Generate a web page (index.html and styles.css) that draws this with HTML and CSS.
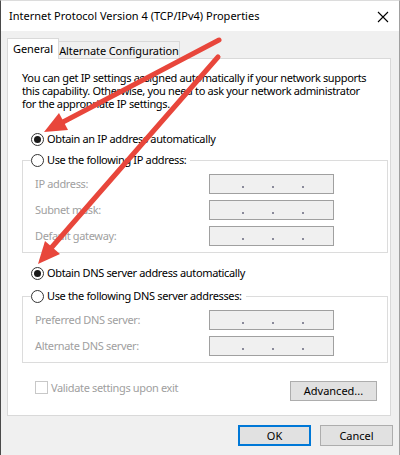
FILE: index.html
```html
<!DOCTYPE html>
<html>
<head>
<meta charset="utf-8">
<link rel="stylesheet" href="styles.css">
</head>
<body>
<div class="window">
  <div class="titlebar">
    <span class="title">Internet Protocol Version 4 (TCP/IPv4) Properties</span>
    <svg class="close" width="12" height="12" viewBox="0 0 12 12"><path d="M1 1 L11 11 M11 1 L1 11" stroke="#000" stroke-width="1.1" fill="none"/></svg>
  </div>
  <div class="tabs">
    <div class="tab active">General</div>
    <div class="tab">Alternate Configuration</div>
  </div>
  <div class="panel">
    <p class="intro">You can get IP settings assigned automatically if your network supports<br>this capability. Otherwise, you need to ask your network administrator<br>for the appropriate IP settings.</p>
    <div class="radio-row first"><span class="radio checked"></span><span>Obtain an IP address automatically</span></div>
    <div class="group g1">
      <div class="group-head"><span class="radio"></span><span>Use the following IP address:</span></div>
      <div class="rows">
        <div class="row"><span class="lbl">IP address:</span><span class="ip"><i></i><i></i><i></i></span></div>
        <div class="row"><span class="lbl">Subnet mask:</span><span class="ip"><i></i><i></i><i></i></span></div>
        <div class="row"><span class="lbl">Default gateway:</span><span class="ip"><i></i><i></i><i></i></span></div>
      </div>
    </div>
    <div class="radio-row dns"><span class="radio checked"></span><span>Obtain DNS server address automatically</span></div>
    <div class="group g2">
      <div class="group-head"><span class="radio"></span><span>Use the following DNS server addresses:</span></div>
      <div class="rows">
        <div class="row"><span class="lbl">Preferred DNS server:</span><span class="ip"><i></i><i></i><i></i></span></div>
        <div class="row"><span class="lbl">Alternate DNS server:</span><span class="ip"><i></i><i></i><i></i></span></div>
      </div>
    </div>
    <div class="bottom-row">
      <div class="check"><span class="box"></span><span>Validate settings upon exit</span></div>
      <div class="btn adv">Advanced...</div>
    </div>
  </div>
  <div class="footer">
    <div class="btn ok">OK</div>
    <div class="btn">Cancel</div>
  </div>
  <svg class="arrows" width="400" height="455" viewBox="0 0 400 455">
    <g stroke="#e8463b" stroke-width="5" stroke-linecap="round" fill="none">
      <line x1="219" y1="40" x2="63" y2="122"/>
      <line x1="218" y1="57" x2="52" y2="247"/>
    </g>
    <g fill="#e8463b">
      <polygon points="44,132 68,130 59,113"/>
      <polygon points="38,264 60,254 45,241"/>
    </g>
  </svg>
</div>
</body>
</html>
```

FILE: styles.css
```css
html, body {
  margin: 0;
  padding: 0;
  background: #f0f0f0;
}
body {
  font-family: "Noto Sans", "Open Sans", sans-serif;
  font-size: 11px;
  line-height: 14px;
  letter-spacing: -0.35px;
  color: #000;
}
.window {
  position: relative;
  width: 400px;
  height: 455px;
  box-sizing: border-box;
  background: #f0f0f0;
  border-left: 1px solid #4a4a4a;
  border-right: 1px solid #a0a0a0;
  border-top: 1px solid #dcdcdc;
  overflow: hidden;
}
.titlebar {
  height: 30px;
  background: #fff;
  display: flex;
  align-items: center;
  justify-content: space-between;
  padding: 0 10px 0 8px;
}
.title {
  font-size: 11px;
  letter-spacing: 0;
  white-space: nowrap;
}
.close {
  display: block;
  margin-top: 1px;
}
.tabs {
  display: flex;
  align-items: flex-end;
  margin: 7px 0 0 6px;
}
.tab {
  box-sizing: border-box;
  height: 17px;
  width: 121px;
  border: 1px solid #d9d9d9;
  border-bottom: none;
  border-left: none;
  background: #f0f0f0;
  text-align: center;
  line-height: 17px;
  letter-spacing: -0.1px;
  white-space: nowrap;
}
.tab.active {
  position: relative;
  z-index: 1;
  height: 21px;
  width: 52px;
  border-left: 1px solid #d9d9d9;
  background: #fff;
  margin-bottom: -1px;
  line-height: 19px;
}
.panel {
  box-sizing: border-box;
  height: 358px;
  margin: 0 8px 0 6px;
  background: #fff;
  border: 1px solid #d9d9d9;
  padding: 12px 2px 0 14px;
}
.intro {
  margin: 0;
  line-height: 13px;
  white-space: nowrap;
}
.radio-row, .group-head, .check {
  display: flex;
  align-items: center;
  height: 14px;
  line-height: 14px;
  white-space: nowrap;
}
.radio-row {
  padding-left: 9px;
}
.radio-row.first { margin-top: 22px; }
.radio-row.dns { margin-top: 13px; }
.radio {
  box-sizing: border-box;
  width: 13px;
  height: 13px;
  border: 1px solid #333;
  border-radius: 50%;
  margin-right: 3px;
  display: flex;
  align-items: center;
  justify-content: center;
  background: #fff;
  flex: none;
}
.radio.checked::after {
  content: "";
  width: 7px;
  height: 7px;
  border-radius: 50%;
  background: #1a1a1a;
}
.group {
  border: 1px solid #dcdcdc;
  padding-bottom: 6px;
}
.g1 { margin-top: 14px; }
.g2 { margin-top: 16px; }
.group-head {
  width: max-content;
  margin: -8px 0 0 8px;
  background: #fff;
  padding-right: 4px;
}
.rows {
  display: flex;
  flex-direction: column;
  gap: 6px;
  margin-top: 7px;
}
.row {
  display: flex;
  align-items: center;
  height: 20px;
  padding-left: 12px;
}
.lbl {
  width: 174px;
  color: #a0a0a0;
  white-space: nowrap;
}
.ip {
  box-sizing: border-box;
  width: 125px;
  height: 20px;
  border: 1px solid #a0a0a0;
  background: #f0f0f0;
  display: flex;
  align-items: flex-end;
  gap: 28px;
  padding: 0 0 5px 32px;
}
.ip i {
  display: block;
  width: 2px;
  height: 2px;
  background: #8a8a9a;
}
.bottom-row {
  display: flex;
  justify-content: space-between;
  align-items: flex-start;
  margin-top: 18px;
  padding: 0 11px 0 13px;
}
.check {
  height: 13px;
  color: #a0a0a0;
}
.box {
  box-sizing: border-box;
  width: 13px;
  height: 13px;
  border: 1px solid #c8c8c8;
  margin-right: 3px;
  background: #fff;
}
.btn {
  box-sizing: border-box;
  width: 73px;
  height: 21px;
  background: #e1e1e1;
  border: 1px solid #adadad;
  display: flex;
  align-items: center;
  justify-content: center;
  white-space: nowrap;
  letter-spacing: 0;
}
.btn.adv {
  width: 87px;
  height: 20px;
}
.btn.ok {
  border: 2px solid #0078d7;
}
.footer {
  display: flex;
  justify-content: flex-end;
  gap: 9px;
  margin-top: 9px;
  padding-right: 6px;
}
.arrows {
  position: absolute;
  left: -1px;
  top: -1px;
  pointer-events: none;
}
```
